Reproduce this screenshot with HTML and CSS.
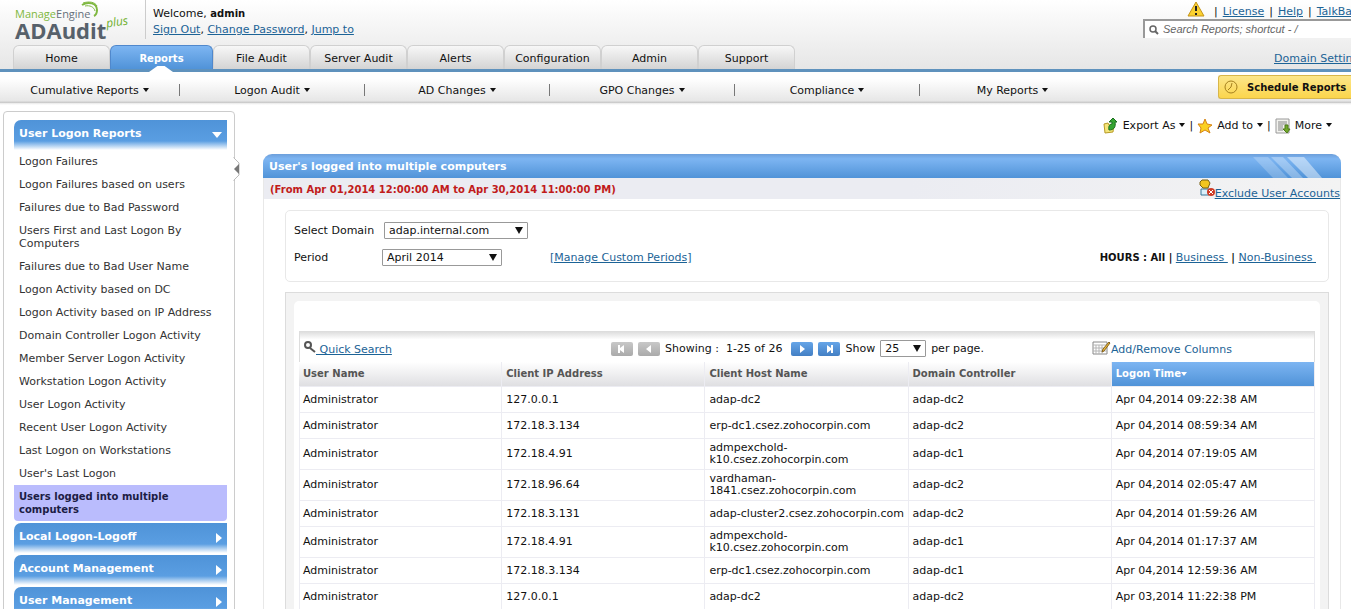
FILE: index.html
```html
<!DOCTYPE html>
<html lang="en">
<head>
    <meta charset="UTF-8">
    <meta name="viewport" content="width=device-width, initial-scale=1.0">
    <title>ADAudit Plus - Reports</title>
    <link rel="stylesheet" href="styles.css">
</head>
<body>
    <header class="header">
        <div class="header-top">
            <a class="logo" href="#">
                <span class="logo-brand"><span class="green">Manage</span>Engine</span>
                <span class="logo-product">ADAudit</span>
                <span class="logo-plus">plus</span>
                <svg class="logo-swirl" width="20" height="17" viewBox="0 0 20 17" fill="none" stroke="#7fb840">
                    <path d="M2 4C8 0 17 2 17 9c0 3-1 5-3 6" stroke-width="2"/>
                    <path d="M5 5c5-1 9 1 10 5M3 2c6-2 12-1 14 3" stroke-width="1"/>
                </svg>
            </a>
            <div class="welcome">
                <p>Welcome, <b>admin</b></p>
                <p><a href="#">Sign Out</a>, <a href="#">Change Password</a>, <a href="#">Jump to</a></p>
            </div>
            <div class="header-right">
                <div class="top-links">
                    <svg width="18" height="16" viewBox="0 0 18 16">
                        <path d="M9 1L17 15H1z" fill="#fbd12f" stroke="#c4931a" stroke-linejoin="round"/>
                        <path d="M9 5v5M9 12v2" stroke="#222" stroke-width="2"/>
                    </svg>
                    <span>|</span><a href="#">License</a><span>|</span><a href="#">Help</a><span>|</span><a href="#">TalkBack</a>
                </div>
                <label class="search">
                    <svg width="10" height="10" viewBox="0 0 10 10" fill="none" stroke="#666">
                        <circle cx="4" cy="4" r="3" stroke-width="1.5"/>
                        <path d="M6 6l3 3" stroke-width="2"/>
                    </svg>
                    <input type="text" placeholder="Search Reports; shortcut - /" aria-label="Search Reports">
                </label>
                <a class="domain-link" href="#">Domain Settings</a>
            </div>
        </div>
        <nav class="tabs">
            <a href="#">Home</a>
            <a href="#" class="active">Reports</a>
            <a href="#">File Audit</a>
            <a href="#">Server Audit</a>
            <a href="#">Alerts</a>
            <a href="#">Configuration</a>
            <a href="#">Admin</a>
            <a href="#">Support</a>
        </nav>
    </header>

    <div class="submenu">
        <nav class="submenu-items">
            <a href="#"><span class="caret">Cumulative Reports</span></a>
            <a href="#"><span class="caret">Logon Audit</span></a>
            <a href="#"><span class="caret">AD Changes</span></a>
            <a href="#"><span class="caret">GPO Changes</span></a>
            <a href="#"><span class="caret">Compliance</span></a>
            <a href="#"><span class="caret">My Reports</span></a>
        </nav>
        <button type="button" class="schedule">
            <svg width="14" height="14" viewBox="0 0 14 14" fill="none" stroke="#a5801d">
                <circle cx="7" cy="7" r="6"/>
                <path d="M8 3L7 7l-3 3"/>
            </svg>
            Schedule Reports
        </button>
    </div>

    <div class="page">
        <aside class="sidebar">
            <button type="button" class="side-head open">User Logon Reports</button>
            <ul class="side-list">
                <li><a href="#">Logon Failures</a></li>
                <li><a href="#">Logon Failures based on users</a></li>
                <li><a href="#">Failures due to Bad Password</a></li>
                <li><a href="#">Users First and Last Logon By Computers</a></li>
                <li><a href="#">Failures due to Bad User Name</a></li>
                <li><a href="#">Logon Activity based on DC</a></li>
                <li><a href="#">Logon Activity based on IP Address</a></li>
                <li><a href="#">Domain Controller Logon Activity</a></li>
                <li><a href="#">Member Server Logon Activity</a></li>
                <li><a href="#">Workstation Logon Activity</a></li>
                <li><a href="#">User Logon Activity</a></li>
                <li><a href="#">Recent User Logon Activity</a></li>
                <li><a href="#">Last Logon on Workstations</a></li>
                <li><a href="#">User's Last Logon</a></li>
                <li><a href="#" class="selected">Users logged into multiple computers</a></li>
            </ul>
            <button type="button" class="side-head">Local Logon-Logoff</button>
            <button type="button" class="side-head">Account Management</button>
            <button type="button" class="side-head">User Management</button>
            <svg class="collapse" width="7" height="24" viewBox="0 0 7 24">
                <path d="M1 0v1l5 5v12l-5 5v1" fill="#fff" stroke="#bbb"/>
                <path d="M6 7v10L1 12z" fill="#777"/>
            </svg>
        </aside>

        <main class="main">
            <div class="actions">
                <svg width="16" height="16" viewBox="0 0 16 16">
                    <path d="M1 6l4-1 1 2 5-1-1 8-8 1z" fill="#f5e57a" stroke="#b79b25"/>
                    <path d="M6 12c-1-4 1-6 3-6V4H6l4-4 4 4h-2c1 5-1 8-6 8z" fill="#35a432" stroke="#1c6f20"/>
                </svg>
                <a href="#"><span class="caret">Export As</span></a>
                <span>|</span>
                <svg width="16" height="16" viewBox="0 0 16 16">
                    <path d="M8 1l2 5 5 1-4 3 2 5-5-3-5 3 1-5-3-4h5z" fill="#fbd021" stroke="#d58316" stroke-linejoin="round"/>
                </svg>
                <a href="#"><span class="caret">Add to</span></a>
                <span>|</span>
                <svg width="16" height="16" viewBox="0 0 16 16">
                    <path d="M1 1h13v14H1z" fill="#f2f2ee" stroke="#999"/>
                    <path d="M3 4h9M3 6h9M3 8h5M3 10h5M3 12h5" stroke="#888"/>
                    <path d="M10 7h3v4h2l-3 4-4-4h2z" fill="#72a82b" stroke="#4c7b18"/>
                </svg>
                <a href="#"><span class="caret">More</span></a>
            </div>

            <section class="panel">
                <div class="panel-title">
                    <h1>User's logged into multiple computers</h1>
                    <svg width="90" height="24" viewBox="0 0 90 24" fill="#fff">
                        <path d="M2 3h15l20 21H22z" opacity=".22"/>
                        <path d="M20 3h12l20 21H41z" opacity=".3"/>
                        <path d="M36 3h17l18 21H57z" opacity=".45"/>
                    </svg>
                </div>
                <div class="panel-sub">
                    <p class="range">(From Apr 01,2014 12:00:00 AM to Apr 30,2014 11:00:00 PM)</p>
                    <a class="exclude" href="#">
                        <svg width="16" height="18" viewBox="0 0 16 18">
                            <path d="M2 10h8v6H2z" fill="#d9effa" stroke="#397799"/>
                            <path d="M3 1h6l2 3-2 5H4L1 6V3z" fill="#f2c51e" stroke="#775f12"/>
                            <circle cx="12" cy="13" r="4" fill="#cf3b25"/>
                            <path d="M10 11l4 4M14 11l-4 4" stroke="#fff"/>
                        </svg><span>Exclude User Accounts</span>
                    </a>
                </div>

                <form class="filters">
                    <div class="filter-row">
                        <label for="domain">Select Domain</label>
                        <span class="select domain">
                            <select id="domain"><option>adap.internal.com</option></select>
                        </span>
                    </div>
                    <div class="filter-row">
                        <label for="period">Period</label>
                        <span class="select period">
                            <select id="period"><option>April 2014</option></select>
                        </span>
                        <a class="custom" href="#">[Manage Custom Periods]</a>
                        <p class="hours"><b>HOURS : All |</b> <a href="#">Business&nbsp;</a> <b>|</b> <a href="#">Non-Business&nbsp;</a></p>
                    </div>
                </form>

                <div class="grid-frame">
                    <div class="grid-inner">
                        <div class="toolbar">
                            <a class="quick" href="#">
                                <svg width="12" height="13" viewBox="0 0 12 13" fill="none" stroke="#555">
                                    <circle cx="4" cy="4" r="3" stroke-width="2"/>
                                    <path d="M6 7l5 4" stroke-width="2"/>
                                </svg><span>&nbsp;Quick Search</span>
                            </a>
                            <div class="pager">
                                <button type="button" class="page-btn" disabled aria-label="First page">
                                    <svg width="10" height="8" viewBox="0 0 10 8" fill="#fff"><path d="M1 0h2v3l4-3v8L3 5v3H1z"/></svg>
                                </button>
                                <button type="button" class="page-btn" disabled aria-label="Previous page">
                                    <svg width="10" height="8" viewBox="0 0 10 8" fill="#fff"><path d="M7 0v8L2 4z"/></svg>
                                </button>
                                <span class="showing">Showing :&nbsp; 1-25 of 26</span>
                                <button type="button" class="page-btn" aria-label="Next page">
                                    <svg width="10" height="8" viewBox="0 0 10 8" fill="#fff"><path d="M3 0v8l5-4z"/></svg>
                                </button>
                                <button type="button" class="page-btn" aria-label="Last page">
                                    <svg width="10" height="8" viewBox="0 0 10 8" fill="#fff"><path d="M9 0H7v3L3 0v8l4-3v3h2z"/></svg>
                                </button>
                                <label for="perPage">Show</label>
                                <span class="select count">
                                    <select id="perPage"><option>25</option></select>
                                </span>
                                <span>per page.</span>
                            </div>
                            <a class="columns" href="#">
                                <svg width="19" height="14" viewBox="0 0 19 14">
                                    <path d="M1 1h14v12H1z" fill="#fff" stroke="#888"/>
                                    <path d="M1 4h14M4 4v9M7 4v9M10 4v9M1 7h14M1 10h14" stroke="#b5b5b5"/>
                                    <path d="M10 11l1-3 6-7 1 1-6 8z" fill="#f0bc3a" stroke="#83611c"/>
                                </svg><span>Add/Remove Columns</span>
                            </a>
                        </div>
                        <table class="report">
                            <thead>
                                <tr>
                                    <th>User Name</th>
                                    <th>Client IP Address</th>
                                    <th>Client Host Name</th>
                                    <th>Domain Controller</th>
                                    <th class="sorted">Logon Time</th>
                                </tr>
                            </thead>
                            <tbody>
                                <tr><td>Administrator</td><td>127.0.0.1</td><td>adap-dc2</td><td>adap-dc2</td><td>Apr 04,2014 09:22:38 AM</td></tr>
                                <tr><td>Administrator</td><td>172.18.3.134</td><td>erp-dc1.csez.zohocorpin.com</td><td>adap-dc2</td><td>Apr 04,2014 08:59:34 AM</td></tr>
                                <tr><td>Administrator</td><td>172.18.4.91</td><td>admpexchold-<br>k10.csez.zohocorpin.com</td><td>adap-dc1</td><td>Apr 04,2014 07:19:05 AM</td></tr>
                                <tr><td>Administrator</td><td>172.18.96.64</td><td>vardhaman-<br>1841.csez.zohocorpin.com</td><td>adap-dc2</td><td>Apr 04,2014 02:05:47 AM</td></tr>
                                <tr><td>Administrator</td><td>172.18.3.131</td><td class="nowrap">adap-cluster2.csez.zohocorpin.com</td><td>adap-dc2</td><td>Apr 04,2014 01:59:26 AM</td></tr>
                                <tr><td>Administrator</td><td>172.18.4.91</td><td>admpexchold-<br>k10.csez.zohocorpin.com</td><td>adap-dc1</td><td>Apr 04,2014 01:17:37 AM</td></tr>
                                <tr><td>Administrator</td><td>172.18.3.134</td><td>erp-dc1.csez.zohocorpin.com</td><td>adap-dc1</td><td>Apr 04,2014 12:59:36 AM</td></tr>
                                <tr><td>Administrator</td><td>127.0.0.1</td><td>adap-dc2</td><td>adap-dc2</td><td>Apr 03,2014 11:22:38 PM</td></tr>
                            </tbody>
                        </table>
                    </div>
                </div>
            </section>
        </main>
    </div>
</body>
</html>
```
FILE: styles.css
```css
:root {
    --link: #1c6396;
    --line: #5f92bd;
    --blue-top: #7db5f2;
    --blue: #5093d8;
}

* {
    margin: 0;
    padding: 0;
    box-sizing: border-box;
}

body {
    font: 11px/13px Verdana, "DejaVu Sans", sans-serif;
    color: #111;
    background: #fff;
    height: 100vh;
    overflow: hidden;
}

a {
    color: var(--link);
}

b {
    font-size: 10px;
}

button, input, select {
    font: inherit;
    color: inherit;
}

svg {
    flex: none;
}

/* Header */
.header {
    background: linear-gradient(#fff, #e6e6e6);
    border-bottom: 3px solid var(--line);
    position: relative;
}

.header-top {
    display: flex;
    height: 45px;
}

.logo {
    position: relative;
    width: 146px;
    height: 39px;
    padding: 7px 0 0 15px;
    border-right: 1px solid #ccc;
    text-decoration: none;
    font-family: "Open Sans", sans-serif;
}

.logo-brand {
    display: block;
    font-size: 11px;
    font-weight: 500;
    line-height: 13px;
    color: #66707a;
}

.green {
    color: #7fb840;
}

.logo-product {
    display: block;
    font-size: 22px;
    font-weight: 700;
    line-height: 20px;
    color: #57616b;
}

.logo-plus {
    position: absolute;
    left: 106px;
    top: 13px;
    font-family: "Open Sans", sans-serif;
    font-size: 12px;
    font-style: italic;
    line-height: 18px;
    color: #6fb02e;
    transform: rotate(-8deg);
}

.logo-swirl {
    position: absolute;
    left: 80px;
    top: 1px;
}

.welcome {
    padding: 6px 0 0 7px;
    line-height: 16px;
}

.header-right {
    width: 208px;
    margin-left: auto;
    white-space: nowrap;
}

.top-links {
    display: flex;
    align-items: center;
    gap: 5px;
    height: 19px;
    padding: 4px 0 0 44px;
}

.top-links svg {
    margin: 0 4px 6px 0;
}

.search {
    display: flex;
    align-items: center;
    gap: 4px;
    height: 19px;
    padding-left: 4px;
    background: #fff;
    border: 2px solid #999;
    border-width: 2px 0 0 2px;
}

.search input {
    width: 100%;
    border: 0;
    outline: none;
    background: none;
    font: italic 11px/15px "Liberation Sans", sans-serif;
}

.search input::placeholder {
    color: #666;
}

.domain-link {
    display: block;
    padding: 14px 0 0 131px;
}

.tabs {
    display: flex;
    padding-left: 13px;
}

.tabs a {
    width: 97px;
    height: 24px;
    line-height: 26px;
    text-align: center;
    color: #111;
    text-decoration: none;
    background: linear-gradient(#f7f7f7, #d4d4d4);
    border: 1px solid #d0d0d0;
    border-bottom: 0;
    border-radius: 6px 6px 0 0;
}

.tabs .active {
    position: relative;
    width: 103px;
    color: #fff;
    font-size: 10px;
    font-weight: bold;
    background: linear-gradient(var(--blue-top), var(--blue));
    border-color: #5088cc;
}

/* white notch below the open tab */
.tabs .active::after {
    content: "";
    position: absolute;
    left: 38px;
    bottom: -3px;
    width: 24px;
    height: 6px;
    background: #fff;
    clip-path: polygon(0 100%, 35% 0, 65% 0, 100% 100%);
}

/* Sub menu */
.submenu {
    display: flex;
    align-items: flex-start;
    justify-content: space-between;
    height: 33px;
    background: linear-gradient(#fff 20%, #e6e6e6 88%, #c4c4c4 92%, #e8e8e8 94%, #fff);
}

.submenu-items {
    display: flex;
}

.submenu-items a {
    width: 185px;
    margin: 12px 0;
    text-align: center;
    color: #111;
    text-decoration: none;
    border-right: 1px solid #777;
    line-height: 13px;
    height: 12px;
}

.submenu-items a:first-child {
    width: 180px;
}

.submenu-items a:last-child {
    border: 0;
}

.caret::after {
    content: "";
    display: inline-block;
    margin: 0 0 2px 4px;
    border: 3px solid transparent;
    border-top: 4px solid #111;
    border-bottom: 0;
}

.schedule {
    display: flex;
    align-items: center;
    gap: 9px;
    width: 133px;
    height: 24px;
    margin-top: 3px;
    padding-left: 5px;
    font-size: 10px;
    font-weight: bold;
    white-space: nowrap;
    background: linear-gradient(#fce68a, #fbd54c);
    border: 1px solid #d8b649;
    border-right: 0;
    border-radius: 3px 0 0 3px;
}

/* Sidebar */
.page {
    display: flex;
    align-items: flex-start;
    gap: 28px;
    padding: 6px 10px 0 3px;
}

.sidebar {
    position: relative;
    flex: none;
    width: 232px;
    padding: 8px 7px 20px 10px;
    border: 1px solid #ccc;
    border-radius: 4px;
}

.side-head {
    display: flex;
    justify-content: space-between;
    width: 100%;
    height: 30px;
    margin-top: 2px;
    padding: 7px 5px 0;
    font-weight: bold;
    color: #fff;
    background: linear-gradient(#4f93d8, #5a9ee2 70%, #fff);
    border: 0;
    border-radius: 7px 0 0 0;
}

.side-head::after {
    content: "";
    width: 6px;
    height: 10px;
    margin-top: 3px;
    background: #fff;
    clip-path: polygon(0 0, 100% 50%, 0 100%);
}

.side-head.open {
    margin-top: 0;
}

.side-head.open::after {
    width: 10px;
    height: 6px;
    margin-top: 5px;
    clip-path: polygon(0 0, 100% 0, 50% 100%);
}

.side-list {
    list-style: none;
}

.side-list a {
    display: block;
    padding: 5px;
    color: #333;
    text-decoration: none;
}

.side-list .selected {
    color: #1c1c44;
    font-size: 10px;
    font-weight: bold;
    background: #babcfd;
    border-radius: 0 0 4px 4px;
}

.collapse {
    position: absolute;
    right: -6px;
    top: 45px;
}

/* Main panel */
.main {
    flex: 1;
    min-width: 0;
}

.actions {
    display: flex;
    align-items: center;
    justify-content: flex-end;
    gap: 4px;
    height: 43px;
    padding: 0 9px 14px 0;
}

.actions a {
    color: #111;
    text-decoration: none;
}

.panel {
    border: 1px solid #e8e8e8;
    border-top: 0;
    border-radius: 9px 9px 0 0;
}

.panel-title {
    display: flex;
    justify-content: space-between;
    height: 24px;
    padding-left: 6px;
    margin: 0 -1px;
    color: #fff;
    background: linear-gradient(#6d9fdb, var(--blue-top) 20%, var(--blue));
    border-radius: 9px 9px 0 0;
}

.panel-title h1 {
    font-size: 11px;
    line-height: 25px;
}

.panel-sub {
    display: flex;
    justify-content: space-between;
    height: 21px;
    background: linear-gradient(90deg, #ebecf2 60%, #f3f3f3);
}

.range {
    padding-left: 6px;
    font-size: 10px;
    line-height: 23px;
    font-weight: bold;
    color: #c11b1b;
}

.exclude {
    display: flex;
    align-items: flex-start;
    padding-top: 1px;
    text-decoration: none;
}

.exclude span {
    margin-top: 8px;
    text-decoration: underline;
}

.filters {
    display: flex;
    flex-direction: column;
    gap: 9px;
    height: 72px;
    margin: 11px 11px 10px 21px;
    padding: 10px 12px 0 8px;
    border: 1px solid #e8e8e8;
    border-radius: 5px;
}

.filter-row {
    display: flex;
    align-items: center;
    height: 18px;
}

.filter-row label {
    width: 88px;
}

.filter-row:first-child label {
    width: 90px;
}

.select {
    position: relative;
    height: 17px;
}

.select select {
    appearance: none;
    width: 100%;
    height: 17px;
    padding-left: 4px;
    line-height: 15px;
    background: #fff;
    border: 1px solid #999;
    border-radius: 1px;
}

.select::after {
    content: "";
    position: absolute;
    right: 5px;
    top: 5px;
    border: 4px solid transparent;
    border-top: 7px solid #111;
    border-bottom: 0;
    pointer-events: none;
}

.select.domain {
    width: 144px;
}

.select.period {
    width: 120px;
}

.select.count {
    width: 46px;
}

.custom {
    margin-left: 48px;
}

.hours {
    margin-left: auto;
}

.grid-frame {
    margin: 0 11px 0 21px;
    padding: 8px;
    background: #f3f3f3;
    border: 1px solid #dcdcdc;
}

.grid-inner {
    padding: 30px 5px;
    background: #fff;
    border-radius: 5px;
}

/* Report table */
.toolbar {
    display: grid;
    grid-template-columns: 307px 1fr 222px;
    align-items: center;
    height: 31px;
    padding: 3px 0 0 4px;
    background: linear-gradient(#dedede, #fff 25%);
    border: 1px solid #ddd;
    border-bottom: 0;
}

.quick {
    display: flex;
    align-items: flex-start;
    text-decoration: none;
}

.quick span {
    margin-top: 2px;
    text-decoration: underline;
}

.pager {
    display: flex;
    align-items: center;
    gap: 5px;
    white-space: nowrap;
}

.showing {
    margin-right: 4px;
}

.page-btn {
    display: flex;
    align-items: center;
    justify-content: center;
    width: 22px;
    height: 14px;
    background: linear-gradient(#66a5e8, #437fc4);
    border: 0;
    border-radius: 2px;
}

.page-btn:disabled {
    background: linear-gradient(#c8c8c8, #aaa);
}

.columns {
    display: flex;
    align-items: flex-start;
    text-decoration: none;
}

.columns span {
    margin-top: 2px;
}

.report {
    width: 100%;
    table-layout: fixed;
    border-collapse: separate;
    border-spacing: 0;
}

.report th,
.report td {
    height: 26px;
    padding: 3px 4px;
    text-align: left;
    line-height: 12px;
    border-right: 1px solid #ececf2;
    border-bottom: 1px solid #ececf2;
}

.report td:first-child {
    border-left: 1px solid #ececf2;
    padding-left: 3px;
}

.report th {
    height: 25px;
    color: #555;
    font-size: 10px;
    background: linear-gradient(#fff, #dfdfe2);
}

.report .sorted {
    color: #fff;
    background: linear-gradient(var(--blue-top), var(--blue));
}

.sorted::after {
    content: "";
    display: inline-block;
    margin-bottom: 1px;
    border: 3px solid transparent;
    border-top: 4px solid #fff;
    border-bottom: 0;
}

.nowrap {
    white-space: nowrap;
}
```
